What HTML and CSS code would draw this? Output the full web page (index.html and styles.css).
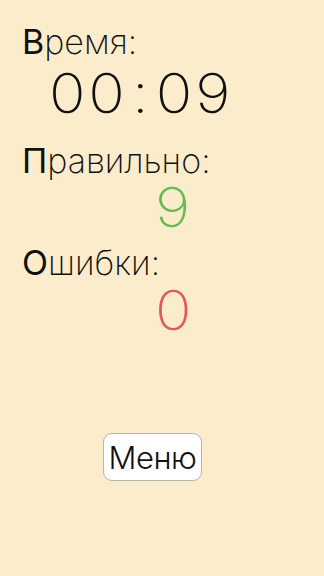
FILE: index.html
```html
<!DOCTYPE html>
<html lang="ru">
<head>
<meta charset="utf-8">
<link rel="stylesheet" href="styles.css">
</head>
<body>
<main class="screen">
  <section class="stat stat-time">
    <div class="label"><span class="cap">В</span>ремя:</div>
    <div class="value timer"><span class="num">00<span class="colon">:</span>09</span></div>
  </section>
  <section class="stat stat-right">
    <div class="label"><span class="cap">П</span>равильно:</div>
    <div class="value score good"><span class="num">9</span></div>
  </section>
  <section class="stat stat-wrong">
    <div class="label"><span class="cap">О</span>шибки:</div>
    <div class="value score bad"><span class="num">0</span></div>
  </section>
  <button class="menu-btn">Меню</button>
</main>
</body>
</html>
```
FILE: styles.css
```css
html, body {
  margin: 0;
  padding: 0;
  background: #fbeccb;
}
body {
  width: 324px;
  height: 576px;
  overflow: hidden;
  font-family: Inter, Roboto, "Liberation Sans", sans-serif;
  color: #111;
}
.screen {
  padding-top: 22px;
  display: flex;
  flex-direction: column;
  align-items: flex-start;
}
.stat {
  display: flex;
  flex-direction: column;
  width: 100%;
}
.stat-right { margin-top: 24px; }
.stat-wrong { margin-top: 12px; }
.label {
  font-size: 34px;
  line-height: 40px;
  font-weight: 200;
  padding-left: 22px;
}
.cap { font-weight: 400; }
.value {
  font-size: 55px;
  line-height: 48px;
  font-weight: 200;
}
.num {
  display: inline-block;
  transform: scaleX(1.1);
  transform-origin: 0 50%;
}
.timer {
  margin-top: 7px;
  padding-left: 49px;
  letter-spacing: 2.5px;
}
.colon {
  margin: 0 4px;
}
.score {
  margin-top: 2px;
  padding-left: 155px;
}
.bad { margin-top: 3px; }
.good { color: #66bb55; }
.bad { color: #e05a5a; }
.menu-btn {
  margin-top: 99px;
  margin-left: 103px;
  width: 99px;
  height: 48px;
  padding: 0;
  background: #fff;
  border: 1px solid #b9b4aa;
  border-radius: 9px;
  font-family: Inter, Roboto, "Liberation Sans", sans-serif;
  font-size: 31px;
  font-weight: 300;
  color: #111;
  letter-spacing: -0.5px;
}
```
